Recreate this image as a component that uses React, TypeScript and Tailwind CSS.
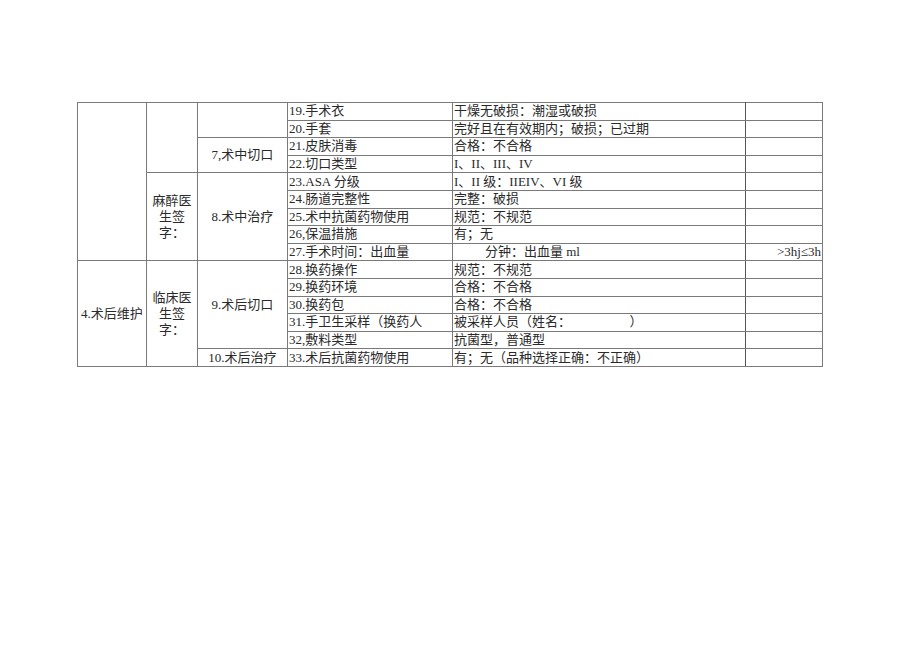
import React from "react";

interface IRow {
  item: string;
  option: string;
  note?: string;
  indent?: boolean;
}

const rows: IRow[] = [
  { item: "19.手术衣", option: "干燥无破损：潮湿或破损" },
  { item: "20.手套", option: "完好且在有效期内；破损；已过期" },
  { item: "21.皮肤消毒", option: "合格：不合格" },
  { item: "22.切口类型", option: "I、II、III、IV" },
  { item: "23.ASA 分级", option: "I、II 级：IIEIV、VI 级" },
  { item: "24.肠道完整性", option: "完整：破损" },
  { item: "25.术中抗菌药物使用", option: "规范：不规范" },
  { item: "26,保温措施", option: "有；无" },
  { item: "27.手术时间：出血量", option: "分钟：出血量 ml", note: ">3hj≤3h", indent: true },
  { item: "28.换药操作", option: "规范：不规范" },
  { item: "29.换药环境", option: "合格：不合格" },
  { item: "30.换药包", option: "合格：不合格" },
  { item: "31.手卫生采样（换药人", option: "被采样人员（姓名：　　　　　）" },
  { item: "32,敷料类型", option: "抗菌型，普通型" },
  { item: "33.术后抗菌药物使用", option: "有；无（品种选择正确：不正确）" },
];

// merged cells on the left, keyed by starting row
const col1: Record<number, { span: number; text: string }> = {
  0: { span: 9, text: "" },
  9: { span: 6, text: "4.术后维护" },
};
const col2: Record<number, { span: number; text: string }> = {
  0: { span: 4, text: "" },
  4: { span: 5, text: "麻醉医生签字：" },
  9: { span: 6, text: "临床医生签字：" },
};
const col3: Record<number, { span: number; text: string }> = {
  0: { span: 2, text: "" },
  2: { span: 2, text: "7,术中切口" },
  4: { span: 5, text: "8.术中治疗" },
  9: { span: 5, text: "9.术后切口" },
  14: { span: 1, text: "10.术后治疗" },
};

const cell = "border border-[#7a7a7a] p-0 align-middle";

const App: React.FC = () => {
  return (
    <div
      className="w-[920px] h-[651px] bg-white pt-[102px] pl-[77px] text-[13px] text-[#2a2a2a]"
      style={{ fontFamily: '"Liberation Serif", "Noto Sans CJK SC", serif' }}
    >
      <table className="table-fixed border-collapse w-[745px]">
        <colgroup>
          <col className="w-[69px]" />
          <col className="w-[51px]" />
          <col className="w-[90px]" />
          <col className="w-[165px]" />
          <col className="w-[293px]" />
          <col className="w-[77px]" />
        </colgroup>
        <tbody>
          {rows.map((row, i) => (
            <tr key={i} className="h-[17.6px] leading-[16px]">
              {col1[i] && (
                <td rowSpan={col1[i].span} className={`${cell} text-center whitespace-nowrap`}>
                  {col1[i].text}
                </td>
              )}
              {col2[i] && (
                <td rowSpan={col2[i].span} className={`${cell} text-center px-[5px] break-all`}>
                  {col2[i].text}
                </td>
              )}
              {col3[i] && (
                <td rowSpan={col3[i].span} className={`${cell} text-center whitespace-nowrap`}>
                  {col3[i].text}
                </td>
              )}
              <td className={`${cell} pl-[1px] whitespace-nowrap overflow-hidden`}>{row.item}</td>
              <td className={`${cell} border-r-[#555] whitespace-nowrap ${row.indent ? "pl-[32px]" : "pl-[1px]"}`}>
                {row.option}
              </td>
              <td className={`${cell} text-right whitespace-nowrap pr-[1px]`}>{row.note}</td>
            </tr>
          ))}
        </tbody>
      </table>
    </div>
  );
};

export default App;
